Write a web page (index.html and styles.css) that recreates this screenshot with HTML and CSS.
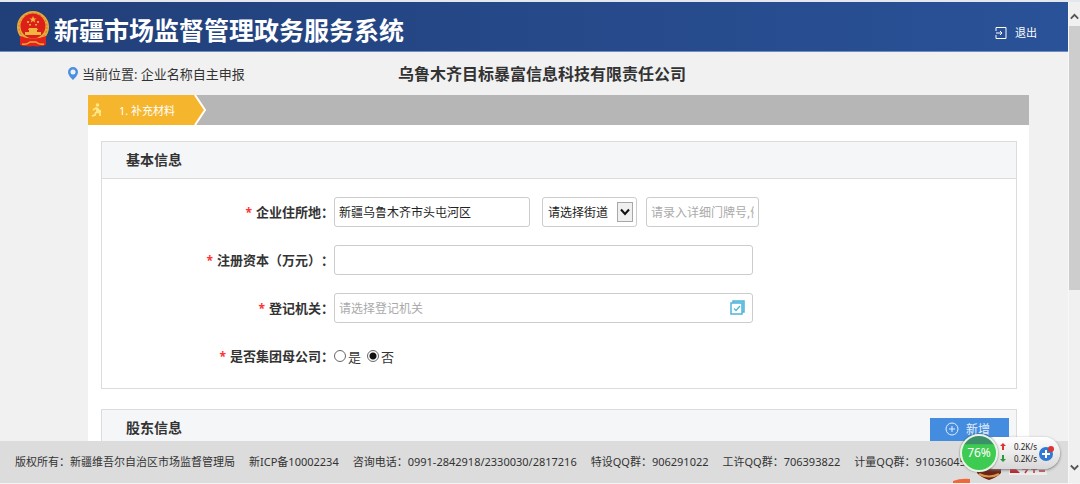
FILE: index.html
```html
<!DOCTYPE html>
<html lang="zh-CN">
<head>
<meta charset="utf-8">
<title>新疆市场监督管理政务服务系统</title>
<link rel="stylesheet" href="styles.css">
</head>
<body>
<div class="window">
  <div class="page">
    <header class="topbar">
      <svg class="emblem" viewBox="0 0 34 36" aria-hidden="true">
        <path d="M4 23h26l-1 11q-6 2-12 1-6 1-12-1z" fill="#d9261c"/>
        <circle cx="17" cy="16" r="16" fill="#e9a83a"/>
        <circle cx="17" cy="16" r="14" fill="none" stroke="#c97b23" stroke-dasharray="2 2"/>
        <circle cx="17" cy="15" r="12.500" fill="#dc1f19"/>
        <path d="M17 5l1 2.400h2.500l-2 1.600.8 2.500-2.300-1.500-2.300 1.500.8-2.500-2-1.600H16z" fill="#f4b73e"/>
        <path d="M11 10h2v2h-2zM21 10h2v2h-2zM13 13h2v1.500h-2zM19 13h2v1.500h-2z" fill="#eda53a"/>
        <path d="M13 17h8l1 2h-1v2h4v3H9v-3h4v-2h-1z" fill="#f2b440"/>
        <path d="M4 25q13 5 26 0v9q-6 2-13 1-7 1-13-1z" fill="#e0241c"/>
        <path d="M6 33q5 1 8-2h6q3 3 8 2" fill="none" stroke="#eba93a" stroke-width="1.500"/>
      </svg>
      <h1 class="site-title">新疆市场监督管理政务服务系统</h1>
      <a class="logout" href="#">
        <svg class="logout-icon" viewBox="0 0 12 12" aria-hidden="true"><path d="M1 4V.5h10v11H1V8M1 6h6M5 4l2 2-2 2" fill="none" stroke="currentColor"/></svg>
        退出
      </a>
    </header>
    <main class="content">
      <div class="location">
        <div class="crumb">
          <svg class="pin" viewBox="0 0 10 14" aria-hidden="true"><path d="M5 0a5 5 0 0 1 5 5c0 3-3 6-5 8C3 11 0 8 0 5a5 5 0 0 1 5-5zm0 2.500a2.500 2.500 0 1 0 0 5 2.500 2.500 0 0 0 0-5z" fill="#4a90e2"/></svg>
          当前位置: 企业名称自主申报
        </div>
        <h2 class="company">乌鲁木齐目标暴富信息科技有限责任公司</h2>
      </div>
      <div class="sheet">
        <div class="steps">
          <div class="step">
            <svg class="runner" viewBox="0 0 12 14" aria-hidden="true"><circle cx="6.500" cy="2" r="1.800" fill="#ffe98a"/><path d="M2 7l3-2 2 1 1 2 2 0M6 5v4l3 1v3M5 9l-1 3-3 1" fill="none" stroke="#ffe98a" stroke-width="1.800"/></svg>
            <span>1. 补充材料</span>
          </div>
          <svg class="step-tip" viewBox="0 0 14 30" aria-hidden="true"><path d="M0 0h2l10 15-10 15H0z" fill="#f5b52c"/><path d="M1 0l10 15-10 15" fill="none" stroke="#fff" stroke-width="2"/></svg>
        </div>
        <div class="panels">
          <section class="panel">
            <div class="panel-head"><h3 class="panel-title">基本信息</h3></div>
            <form class="form">
              <div class="row">
                <label class="label" for="address"><span class="star">*</span>企业住所地：</label>
                <div class="field split">
                  <input class="box area" id="address" type="text" value="新疆乌鲁木齐市头屯河区">
                  <div class="street-wrap">
                    <select class="box street" aria-label="街道"><option>请选择街道</option></select>
                    <svg class="drop" viewBox="0 0 16 20" aria-hidden="true"><rect x=".5" y=".5" width="15" height="19" fill="#f0f0f0" stroke="#a8a8a8"/><path d="M4 7.500l4 4.500 4-4.500" fill="none" stroke="#111" stroke-width="2"/></svg>
                  </div>
                  <input class="box door" type="text" aria-label="详细门牌号" placeholder="请录入详细门牌号,例如">
                </div>
              </div>
              <div class="row">
                <label class="label" for="capital"><span class="star">*</span>注册资本（万元）：</label>
                <div class="field"><input class="box" id="capital" type="text"></div>
              </div>
              <div class="row">
                <label class="label" for="office"><span class="star">*</span>登记机关：</label>
                <div class="field">
                  <input class="box" id="office" type="text" placeholder="请选择登记机关">
                  <svg class="pick" viewBox="0 0 15 15" aria-hidden="true"><path d="M3 3V1h11v11h-2" fill="#a5dcf0" stroke="#4fb4da" stroke-width="1.500"/><rect x="1" y="3" width="11" height="11" fill="#fff" stroke="#4fb4da" stroke-width="1.500"/><path d="M4 8.500l2 2 4-4.500" fill="none" stroke="#4fb4da" stroke-width="1.300"/></svg>
                </div>
              </div>
              <div class="row">
                <span class="label" id="parent-label"><span class="star">*</span>是否集团母公司：</span>
                <div class="field radios" role="radiogroup" aria-labelledby="parent-label">
                  <label class="choice"><input class="radio" type="radio" name="parent">是</label>
                  <label class="choice"><input class="radio" type="radio" name="parent" checked>否</label>
                </div>
              </div>
            </form>
          </section>
          <section class="panel">
            <div class="panel-head">
              <h3 class="panel-title">股东信息</h3>
              <button class="add" type="button">
                <svg class="add-icon" viewBox="0 0 14 14" aria-hidden="true"><path d="M7 4v6M4 7h6" stroke="currentColor"/><circle cx="7" cy="7" r="6" fill="none" stroke="currentColor"/></svg>
                新增
              </button>
            </div>
          </section>
        </div>
      </div>
    </main>
    <footer class="footer">
      <span>版权所有：新疆维吾尔自治区市场监督管理局</span>
      <span>新ICP备10002234</span>
      <span>咨询电话：0991-2842918/2330030/2817216</span>
      <span>特设QQ群：906291022</span>
      <span>工许QQ群：706393822</span>
      <span>计量QQ群：91036045</span>
    </footer>
  </div>
  <div class="scrollbar" aria-hidden="true">
    <svg class="arrow" viewBox="0 0 12 24"><path d="M2 17l4-4 4 4" fill="none" stroke="#555" stroke-width="2"/></svg>
    <div class="thumb"></div>
    <svg class="arrow" viewBox="0 0 12 24"><path d="M2 6l4 4 4-4" fill="none" stroke="#555" stroke-width="2"/></svg>
  </div>
  <svg class="badges" viewBox="0 0 110 26" aria-hidden="true">
    <path d="M25 8h24v8q-5 5-12 7-7-2-12-7z" fill="#6b2417"/>
    <path d="M27 17q10 5 20 0" fill="none" stroke="#d9974c" stroke-width="2"/>
    <path d="M57 2h38v16H57z" fill="#ececec"/>
    <path d="M58 6l10 10H58z" fill="#c9202a"/>
    <path d="M70 12h4M77 10l-4 6M79 12h6M82 9v7M87 11h6M87 14h6" stroke="#b8303a" stroke-width="1.500"/>
    <path d="M1 24q8-3 17-2v4H1z" fill="#f0673a"/>
  </svg>
  <div class="meter">
    <div class="ball">76%</div>
    <div class="rates">
      <div class="rate"><svg class="trend up" viewBox="0 0 6 8" role="img" aria-label="上传"><path d="M3 0l3 3H4v4H2V3H0z" fill="currentColor"/></svg>0.2K/s</div>
      <div class="rate"><svg class="trend down" viewBox="0 0 6 8" role="img" aria-label="下载"><path d="M3 7L0 4h2V0h2v4h2z" fill="currentColor"/></svg>0.2K/s</div>
    </div>
    <svg class="plus" viewBox="0 0 18 18" aria-hidden="true"><circle cx="8" cy="10" r="7" fill="#3079d4"/><path d="M8 6v8M4 10h8" stroke="#fff" stroke-width="2"/><circle cx="13" cy="5" r="3" fill="#d93636"/></svg>
  </div>
</div>
</body>
</html>
```
FILE: styles.css
```css
* { box-sizing: border-box; }
body { margin: 0; background: #f1f1f1; color: #333; font-family: "Noto Sans", "Noto Sans CJK SC", sans-serif; font-size: 12px; }
h1, h2, h3 { margin: 0; }
svg { display: block; flex: none; }
input, select, button { font-family: inherit; }

.window { position: relative; display: flex; height: 100vh; overflow: hidden; border-top: 2px solid #e4e7ee; border-bottom: 1px solid #f4f4f4; }
.page { flex: 1; min-width: 0; display: flex; flex-direction: column; }

.topbar { flex: none; display: flex; align-items: center; height: 50px; padding: 4px 31px 0 16px; background: linear-gradient(90deg, #213f79, #2a5298); border-bottom: 1px solid #6f8dc0; color: #fff; }
.emblem { width: 34px; height: 36px; margin-right: 4px; }
.site-title { font-family: "Noto Sans CJK SC", sans-serif; font-size: 25px; line-height: 36px; white-space: nowrap; }
.logout { display: flex; align-items: center; gap: 8px; margin-left: auto; padding-top: 8px; color: #fff; font-size: 11px; line-height: 16px; text-decoration: none; }
.logout-icon { width: 12px; height: 12px; }

.content { flex: 1; min-height: 0; overflow: hidden; }
.location { display: grid; grid-template-columns: 330px 1fr; align-items: center; height: 43px; padding-left: 68px; }
.crumb { display: flex; align-items: center; gap: 4px; font-size: 13px; }
.pin { width: 10px; height: 14px; }
.company { font-size: 16px; line-height: 24px; white-space: nowrap; }

.sheet { margin: 0 39px 0 88px; background: #fff; }
.steps { display: flex; height: 30px; background: #b6b6b6; }
.step { display: flex; align-items: center; gap: 16px; width: 106px; padding-left: 3px; background: #f5b52c; color: #fff; font-size: 11px; white-space: nowrap; }
.runner { width: 12px; height: 14px; }
.step-tip { width: 14px; height: 30px; }

.panels { display: flex; flex-direction: column; gap: 20px; padding: 16px 12px 20px 13px; }
.panel { border: 1px solid #dcdcdc; }
.panel-head { display: flex; align-items: center; justify-content: space-between; height: 37px; padding: 0 7px 0 24px; background: #f5f6f8; border-bottom: 1px solid #dcdcdc; }
.panel-title { font-size: 14px; line-height: 20px; }
.add { display: flex; align-items: center; justify-content: center; gap: 7px; align-self: flex-end; width: 79px; height: 28px; border: 0; padding: 0 4px 6px 0; background: #448ce0; color: #e3eefb; font-size: 12px; }
.add-icon { width: 14px; height: 14px; }

.form { display: flex; flex-direction: column; gap: 18px; padding: 18px 0 17px; }
.row { display: flex; align-items: center; height: 30px; }
.label { flex: none; width: 232px; padding-bottom: 2px; font-size: 13px; font-weight: bold; text-align: right; text-spacing-trim: space-all; white-space: nowrap; }
.star { margin-right: 4px; color: #f33; font-size: 12px; }
.field { position: relative; width: 419px; }
.split { display: flex; align-items: center; width: 425px; }
.box { width: 100%; height: 30px; padding: 0 4px; border: 1px solid #ccc; border-radius: 3px; background: #fff; color: #222; font-size: 12px; }
.box::placeholder { color: #aaa; opacity: 1; }
.split .area { width: 196px; }
.street-wrap { position: relative; width: 95px; margin: 0 9px 0 12px; }
.street { padding: 0 5px; appearance: none; }
.drop { position: absolute; top: 5px; right: 4px; width: 16px; height: 20px; pointer-events: none; }
.split .door { width: 113px; }
.pick { position: absolute; top: 7px; right: 8px; width: 15px; height: 15px; }
.radios { display: flex; gap: 6px; }
.choice { display: flex; align-items: center; gap: 2px; font-size: 13px; }
.radio { appearance: none; width: 12px; height: 12px; margin: 0; border: 1px solid #666; border-radius: 50%; background: #fff; }
.radio:checked { background: radial-gradient(circle, #111 0 3px, #fff 4px); }

.footer { flex: none; display: flex; align-items: center; gap: 14px; height: 42px; padding: 0 0 2px 15px; overflow: hidden; background: #dcdcdc; color: #333; font-size: 11px; white-space: nowrap; }

.scrollbar { display: flex; flex-direction: column; justify-content: space-between; width: 12px; border-left: 1px solid #f8f8f8; background: #f0f0f0; }
.arrow { width: 100%; height: 24px; }
.thumb { height: 264px; margin-bottom: auto; background: #cdcdcd; }

.badges { position: absolute; right: 18px; bottom: 0; width: 110px; height: 26px; }
.meter { position: absolute; right: 20px; bottom: 14px; display: flex; align-items: center; width: 82px; height: 32px; padding-right: 4px; border-radius: 16px; background: linear-gradient(#fff, #d8d8d8); box-shadow: 0 1px 3px #777; }
.ball { flex: none; width: 38px; height: 38px; margin-left: -18px; border: 2px solid #e6f4e6; border-radius: 50%; background: linear-gradient(#3d8f6a 0 22%, #3ecb52 26%); box-shadow: 0 0 2px #555; color: #fff; font-size: 12px; line-height: 34px; text-align: center; }
.rates { flex: 1; min-width: 0; padding-left: 2px; font-size: 8px; line-height: 12px; color: #222; white-space: nowrap; }
.rate { display: flex; align-items: center; gap: 8px; }
.trend { width: 6px; height: 8px; }
.up { color: #e03030; }
.down { color: #2c9a3c; }
.plus { width: 18px; height: 18px; }
```
